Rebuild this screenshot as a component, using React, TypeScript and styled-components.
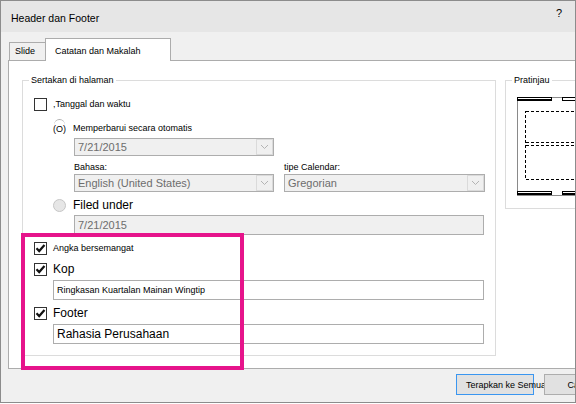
import React from 'react';
import styled, { createGlobalStyle } from 'styled-components';

const App: React.FC = () => {
  return (
    <>
      <GlobalStyle />

      <Window>
        <TitleBar>
          <Title>Header dan Footer</Title>
          <Help>?</Help>
        </TitleBar>

        <TabStrip>
          <Tab>Slide</Tab>
          <Tab $active>Catatan dan Makalah</Tab>
        </TabStrip>

        <Panel>
          <Group $width={474}>
            <Legend>Sertakan di halaman</Legend>
            <GroupBody>
              <CheckRow>
                <CheckBox />
                <SmallLabel>,Tanggal dan waktu</SmallLabel>
              </CheckRow>

              <RadioRow $gap={11}>
                <OldRadio>(O)</OldRadio>
                <SmallLabel>Memperbarui secara otomatis</SmallLabel>
              </RadioRow>

              <Select $indent={40} $width={200} $gap={3}>
                <SelectText>7/21/2015</SelectText>
                <ArrowBox>
                  <Chevron />
                </ArrowBox>
              </Select>

              <SelectGrid>
                <SmallLabel>Bahasa:</SmallLabel>
                <SmallLabel>tipe Calendar:</SmallLabel>
                <Select>
                  <SelectText>English (United States)</SelectText>
                  <ArrowBox>
                    <Chevron />
                  </ArrowBox>
                </Select>
                <Select>
                  <SelectText>Gregorian</SelectText>
                  <ArrowBox>
                    <Chevron />
                  </ArrowBox>
                </Select>
              </SelectGrid>

              <RadioRow $gap={7}>
                <RadioCircle />
                <BigLabel>Filed under</BigLabel>
              </RadioRow>

              <TextBox $indent={40} $width={410} $gap={3} $disabled>
                7/21/2015
              </TextBox>

              <CheckRow $gap={7}>
                <CheckBox checked />
                <SmallLabel>Angka bersemangat</SmallLabel>
              </CheckRow>

              <CheckRow $gap={8}>
                <CheckBox checked />
                <BigLabel>Kop</BigLabel>
              </CheckRow>

              <TextBox $indent={19} $width={431} $gap={4} $size={9}>
                Ringkasan Kuartalan Mainan Wingtip
              </TextBox>

              <CheckRow $gap={7}>
                <CheckBox checked />
                <BigLabel>Footer</BigLabel>
              </CheckRow>

              <TextBox $indent={19} $width={431} $gap={4} $size={12}>
                Rahasia Perusahaan
              </TextBox>
            </GroupBody>
          </Group>

          <Group $width={100}>
            <Legend>Pratinjau</Legend>
            <PreviewBody>
              <PagePreview />
            </PreviewBody>
          </Group>
        </Panel>

        <ButtonRow>
          <Button $focused>Terapkan ke Semua</Button>
          <Button $centered>Cancel</Button>
        </ButtonRow>

        <Highlight />
      </Window>
    </>
  );
};

const CheckBox: React.FC<{ checked?: boolean }> = ({ checked }) => (
  <Box>
    {checked && (
      <svg width='11' height='11' viewBox='0 0 11 11'>
        <path d='M1.5 5.3 L4.2 8.1 L9.5 2.1' fill='none' stroke='#111' strokeWidth='2.2' />
      </svg>
    )}
  </Box>
);

const Chevron: React.FC = () => (
  <svg width='9' height='6' viewBox='0 0 9 6'>
    <path d='M1 1 L4.5 4.5 L8 1' fill='none' stroke='#b4b4b4' strokeWidth='1' />
  </svg>
);

const PagePreview: React.FC = () => (
  <svg width='70' height='101' viewBox='0 0 70 101' shapeRendering='crispEdges'>
    <rect x='0.5' y='1.5' width='100' height='98' fill='#fff' stroke='#8a8a8a' />
    <rect x='0' y='1' width='35' height='4' fill='#000' />
    <rect x='1' y='2' width='33' height='1' fill='#fff' />
    <rect x='45.5' y='1.5' width='40' height='3' fill='#fff' stroke='#000' />
    <rect x='8.5' y='15.5' width='80' height='68' fill='none' stroke='#000' strokeDasharray='3 2' />
    <line x1='8.5' y1='46.5' x2='90' y2='46.5' stroke='#000' strokeDasharray='3 2' />
    <line x1='8.5' y1='49.5' x2='90' y2='49.5' stroke='#000' strokeDasharray='3 2' />
    <rect x='0' y='95' width='35' height='4' fill='#000' />
    <rect x='1' y='96' width='33' height='1' fill='#fff' />
    <rect x='45' y='95' width='40' height='4' fill='#000' />
    <rect x='46' y='96' width='40' height='1' fill='#fff' />
  </svg>
);

const GlobalStyle = createGlobalStyle`
  body {
    margin: 0;
    background: #fff;
    font-family: 'Liberation Sans', Arial, sans-serif;
    color: #000;
  }
`;

const Window = styled.div`
  position: relative;
  width: 576px;
  height: 403px;
  box-sizing: border-box;
  border: 1px solid #8c8c8c;
  background: #f0f0f0;
  overflow: hidden;
  display: flex;
  flex-direction: column;
`;

const TitleBar = styled.div`
  height: 31px;
  flex: none;
  background: #e6e6e6;
  display: flex;
  align-items: center;
  justify-content: space-between;
  padding: 2px 13px 0 10px;
  box-sizing: border-box;
`;

const Title = styled.span`
  font-size: 10.5px;
`;

const Help = styled.span`
  align-self: flex-start;
  margin-top: 4px;
  font-size: 11px;
`;

const TabStrip = styled.div`
  height: 28px;
  flex: none;
  display: flex;
  align-items: flex-end;
  padding-left: 8px;
`;

const Tab = styled.div<{ $active?: boolean }>`
  position: relative;
  box-sizing: border-box;
  border: 1px solid #acacac;
  border-bottom: none;
  font-size: 9px;
  line-height: 17px;
  white-space: nowrap;
  background: ${(p) => (p.$active ? '#fff' : '#f0f0f0')};
  height: ${(p) => (p.$active ? '23px' : '18px')};
  width: ${(p) => (p.$active ? '126px' : '37px')};
  padding: ${(p) => (p.$active ? '4px 0 0 9px' : '0 0 0 5px')};
  margin: ${(p) => (p.$active ? '0 0 -1px -1px' : '0')};
  z-index: ${(p) => (p.$active ? 1 : 0)};
`;

const Panel = styled.div`
  flex: none;
  width: 640px;
  height: 309px;
  margin-left: 7px;
  box-sizing: border-box;
  border: 1px solid #acacac;
  background: #fff;
  padding: 14px 0 0 13px;
  display: flex;
  align-items: flex-start;
  gap: 9px;
`;

const Group = styled.fieldset<{ $width: number }>`
  margin: 0;
  padding: 0;
  min-width: 0;
  box-sizing: border-box;
  width: ${(p) => p.$width}px;
  border: 1px solid #dcdcdc;
`;

const Legend = styled.legend`
  margin-left: 6px;
  padding: 0 2px;
  font-size: 9px;
  line-height: 11px;
`;

const GroupBody = styled.div`
  display: flex;
  flex-direction: column;
  align-items: flex-start;
  padding: 12px 0 11px 11px;
`;

const PreviewBody = styled.div`
  padding: 10px 0 11px 11px;
  line-height: 0;
`;

const CheckRow = styled.div<{ $gap?: number }>`
  display: flex;
  align-items: center;
  gap: 6px;
  height: 13px;
  margin-top: ${(p) => p.$gap ?? 0}px;
`;

const RadioRow = styled.div<{ $gap: number }>`
  display: flex;
  align-items: center;
  gap: 7px;
  height: 13px;
  margin: ${(p) => p.$gap}px 0 0 19px;
`;

const Box = styled.div`
  width: 13px;
  height: 13px;
  box-sizing: border-box;
  border: 1px solid #333;
  background: #fff;
  display: flex;
  align-items: center;
  justify-content: center;
`;

const OldRadio = styled.span`
  position: relative;
  font-size: 9px;
  width: 13px;

  &::before {
    content: '';
    position: absolute;
    left: 1px;
    top: -5px;
    width: 11px;
    height: 11px;
    border-radius: 50%;
    border-top: 1px solid #b0b0b0;
  }
`;

const RadioCircle = styled.div`
  width: 13px;
  height: 13px;
  box-sizing: border-box;
  border-radius: 50%;
  border: 1px solid #c6c6c6;
  background: #e6e6e6;
`;

const SmallLabel = styled.span`
  font-size: 9px;
  line-height: 11px;
  white-space: nowrap;
`;

const BigLabel = styled.span`
  font-size: 12px;
  line-height: 13px;
  white-space: nowrap;
`;

const SelectGrid = styled.div`
  display: grid;
  grid-template-columns: 200px 201px;
  column-gap: 10px;
  row-gap: 1px;
  margin: 6px 0 0 40px;
`;

const Select = styled.div<{ $indent?: number; $width?: number; $gap?: number }>`
  display: flex;
  align-items: stretch;
  box-sizing: border-box;
  height: 18px;
  width: ${(p) => (p.$width ? `${p.$width}px` : 'auto')};
  margin: ${(p) => p.$gap ?? 0}px 0 0 ${(p) => p.$indent ?? 0}px;
  border: 1px solid #adadad;
  background: #f0f0f0;
`;

const SelectText = styled.span`
  flex: 1;
  padding-left: 3px;
  font-size: 11px;
  line-height: 16px;
  color: #6d6d6d;
  white-space: nowrap;
  overflow: hidden;
`;

const ArrowBox = styled.div`
  width: 17px;
  box-sizing: border-box;
  border: 1px solid #dadada;
  display: flex;
  align-items: center;
  justify-content: center;
`;

const TextBox = styled.div<{
  $indent: number;
  $width: number;
  $gap: number;
  $size?: number;
  $disabled?: boolean;
}>`
  box-sizing: border-box;
  height: 20px;
  width: ${(p) => p.$width}px;
  margin: ${(p) => p.$gap}px 0 0 ${(p) => p.$indent}px;
  border: 1px solid #adadad;
  padding-left: 3px;
  display: flex;
  align-items: center;
  white-space: nowrap;
  font-size: ${(p) => (p.$disabled ? 11 : p.$size ?? 9)}px;
  color: ${(p) => (p.$disabled ? '#6d6d6d' : '#000')};
  background: ${(p) => (p.$disabled ? '#f0f0f0' : '#fff')};
`;

const ButtonRow = styled.div`
  display: flex;
  justify-content: flex-end;
  gap: 10px;
  padding-top: 5px;
  margin-right: -44px;
`;

const Button = styled.div<{ $focused?: boolean; $centered?: boolean }>`
  box-sizing: border-box;
  height: 21px;
  width: ${(p) => (p.$focused ? '78px' : '75px')};
  border: 1px solid ${(p) => (p.$focused ? '#3a96f0' : '#adadad')};
  background: #e1e1e1;
  font-size: 9px;
  line-height: 20px;
  white-space: nowrap;
  padding-left: ${(p) => (p.$centered ? '0' : '9px')};
  text-align: ${(p) => (p.$centered ? 'center' : 'left')};
`;

const Highlight = styled.div`
  position: absolute;
  left: 20px;
  top: 232px;
  width: 223px;
  height: 137px;
  box-sizing: border-box;
  border: 4px solid #e6148b;
  pointer-events: none;
`;

export default App;
